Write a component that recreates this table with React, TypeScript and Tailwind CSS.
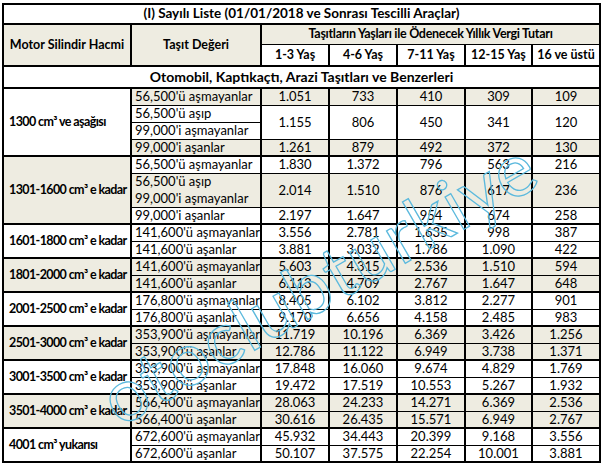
type Row = { t: string[]; v: string[]; gray: boolean; split?: boolean };
type Group = { label: string; gray: boolean; rows: Row[] };

const groups: Group[] = [
  {
    label: '1300 cm³ ve aşağısı',
    gray: false,
    rows: [
      { t: ["56,500'ü aşmayanlar"], v: ['1.051', '733', '410', '309', '109'], gray: true },
      { t: ["56,500'ü aşıp", "99,000'i aşmayanlar"], v: ['1.155', '806', '450', '341', '120'], gray: false, split: true },
      { t: ["99,000'i aşanlar"], v: ['1.261', '879', '492', '372', '130'], gray: true },
    ],
  },
  {
    label: '1301-1600 cm³ e kadar',
    gray: true,
    rows: [
      { t: ["56,500'ü aşmayanlar"], v: ['1.830', '1.372', '796', '563', '216'], gray: false },
      { t: ["56,500'ü aşıp", "99,000'i aşmayanlar"], v: ['2.014', '1.510', '876', '617', '236'], gray: true },
      { t: ["99,000'i aşanlar"], v: ['2.197', '1.647', '954', '674', '258'], gray: false },
    ],
  },
  {
    label: '1601-1800 cm³ e kadar',
    gray: false,
    rows: [
      { t: ["141,600'ü aşmayanlar"], v: ['3.556', '2.781', '1.635', '998', '387'], gray: false },
      { t: ["141,600'ü aşanlar"], v: ['3.881', '3.032', '1.786', '1.090', '422'], gray: false },
    ],
  },
  {
    label: '1801-2000 cm³ e kadar',
    gray: true,
    rows: [
      { t: ["141,600'ü aşmayanlar"], v: ['5.603', '4.315', '2.536', '1.510', '594'], gray: true },
      { t: ["141,600'ü aşanlar"], v: ['6.113', '4.709', '2.767', '1.647', '648'], gray: true },
    ],
  },
  {
    label: '2001-2500 cm³ e kadar',
    gray: false,
    rows: [
      { t: ["176,800'ü aşmayanlar"], v: ['8.405', '6.102', '3.812', '2.277', '901'], gray: false },
      { t: ["176,800'ü aşanlar"], v: ['9.170', '6.656', '4.158', '2.485', '983'], gray: false },
    ],
  },
  {
    label: '2501-3000 cm³ e kadar',
    gray: true,
    rows: [
      { t: ["353,900'ü aşmayanlar"], v: ['11.719', '10.196', '6.369', '3.426', '1.256'], gray: true },
      { t: ["353,900'ü aşanlar"], v: ['12.786', '11.122', '6.949', '3.738', '1.371'], gray: true },
    ],
  },
  {
    label: '3001-3500 cm³ e kadar',
    gray: false,
    rows: [
      { t: ["353,900'ü aşmayanlar"], v: ['17.848', '16.060', '9.674', '4.829', '1.769'], gray: false },
      { t: ["353,900'ü aşanlar"], v: ['19.472', '17.519', '10.553', '5.267', '1.932'], gray: false },
    ],
  },
  {
    label: '3501-4000 cm³ e kadar',
    gray: true,
    rows: [
      { t: ["566,400'ü aşmayanlar"], v: ['28.063', '24.233', '14.271', '6.369', '2.536'], gray: true },
      { t: ["566,400'ü aşanlar"], v: ['30.616', '26.435', '15.571', '6.949', '2.767'], gray: true },
    ],
  },
  {
    label: '4001 cm³ yukarısı',
    gray: false,
    rows: [
      { t: ["672,600'ü aşmayanlar"], v: ['45.932', '34.443', '20.399', '9.168', '3.556'], gray: false },
      { t: ["672,600'ü aşanlar"], v: ['50.107', '37.575', '22.254', '10.001', '3.881'], gray: false },
    ],
  },
];

const ages = ['1-3 Yaş', '4-6 Yaş', '7-11 Yaş', '12-15 Yaş', '16 ve üstü'];

function groupRows(g: Group) {
  const span = g.rows.reduce((n, r) => n + r.t.length, 0);
  const out: JSX.Element[] = [];
  g.rows.forEach((r, ri) => {
    const top = ri === 0 ? 'border-t-2' : 'border-t';
    const bg = r.gray ? 'bg-[#eeece1]' : 'bg-white';
    const numCells = r.v.map((v, i) => (
      <td
        key={i}
        rowSpan={r.t.length}
        className={`${top} border-b border-l-2 border-r-2 border-black text-center ${bg}`}
      >
        {v}
      </td>
    ));
    if (r.t.length === 1) {
      out.push(
        <tr key={`${g.label}-${ri}`} className="h-[17px]">
          {ri === 0 && (
            <td
              rowSpan={span}
              className={`border-t-2 border-b-2 border-l-2 border-r-2 border-black pl-[5px] text-[12.5px] font-bold tracking-[-0.6px] ${
                g.gray ? 'bg-[#eeece1]' : 'bg-white'
              }`}
            >
              {g.label}
            </td>
          )}
          <td className={`${top} border-b border-l-2 border-r-2 border-black pl-[3px] ${bg}`}>{r.t[0]}</td>
          {numCells}
        </tr>
      );
    } else {
      out.push(
        <tr key={`${g.label}-${ri}-a`} className="h-[17px]">
          <td
            className={`${top} border-l-2 border-r-2 border-black pl-[3px] ${bg} ${
              r.split ? 'border-b' : 'border-b-0'
            }`}
          >
            {r.t[0]}
          </td>
          {numCells}
        </tr>
      );
      out.push(
        <tr key={`${g.label}-${ri}-b`} className="h-[17px]">
          <td
            className={`border-b border-l-2 border-r-2 border-black pl-[3px] ${bg} ${
              r.split ? 'border-t' : 'border-t-0'
            }`}
          >
            {r.t[1]}
          </td>
        </tr>
      );
    }
  });
  return out;
}

export default function App() {
  return (
    <div className="relative h-[464px] w-[601px] overflow-hidden whitespace-nowrap bg-white pl-[2px] pt-[3px] font-['Lato',sans-serif] text-[13px] leading-none text-black">
      <table className="table-fixed border-collapse border-2 border-black">
        <colgroup>
          <col className="w-[128px]" />
          <col className="w-[128px]" />
          <col className="w-[68px]" />
          <col className="w-[68px]" />
          <col className="w-[68px]" />
          <col className="w-[67px]" />
          <col className="w-[68px]" />
        </colgroup>
        <tbody>
          <tr className="h-[20px]">
            <td colSpan={7} className="border-2 border-black bg-white text-center text-[13.5px] font-bold">
              (I) Sayılı Liste (01/01/2018 ve Sonrası Tescilli Araçlar)
            </td>
          </tr>
          <tr className="h-[20px]">
            <td rowSpan={2} className="border-2 border-black bg-[#eeece1] text-center text-[12.5px] font-bold">
              Motor Silindir Hacmi
            </td>
            <td rowSpan={2} className="border-2 border-black bg-[#eeece1] text-center text-[12.5px] font-bold">
              Taşıt Değeri
            </td>
            <td colSpan={5} className="border-t-2 border-b border-l-2 border-r-2 border-black bg-[#eeece1] text-center text-[12.5px] font-bold tracking-[-0.3px]">
              Taşıtların Yaşları ile Ödenecek Yıllık Vergi Tutarı
            </td>
          </tr>
          <tr className="h-[22px]">
            {ages.map((a) => (
              <td key={a} className="border-t border-b-2 border-l-2 border-r-2 border-black bg-white text-center text-[12.5px] font-bold">
                {a}
              </td>
            ))}
          </tr>
          <tr className="h-[22px]">
            <td colSpan={7} className="border-2 border-black bg-white text-center text-[14px] font-bold">
              Otomobil, Kaptıkaçtı, Arazi Taşıtları ve Benzerleri
            </td>
          </tr>
          {groups.flatMap((g) => groupRows(g))}
        </tbody>
      </table>

      {/* watermark */}
      <svg className="pointer-events-none absolute left-0 top-0" width="601" height="464">
        <text
          x="0"
          y="0"
          transform="translate(120 428) rotate(-30)"
          fontFamily="Lato, sans-serif"
          fontSize="74"
          textLength="488"
          lengthAdjust="spacing"
          fill="none"
          stroke="#5bb9dd"
          strokeWidth="1.3"
        >
          otoclubturkiye
        </text>
      </svg>
    </div>
  );
}
